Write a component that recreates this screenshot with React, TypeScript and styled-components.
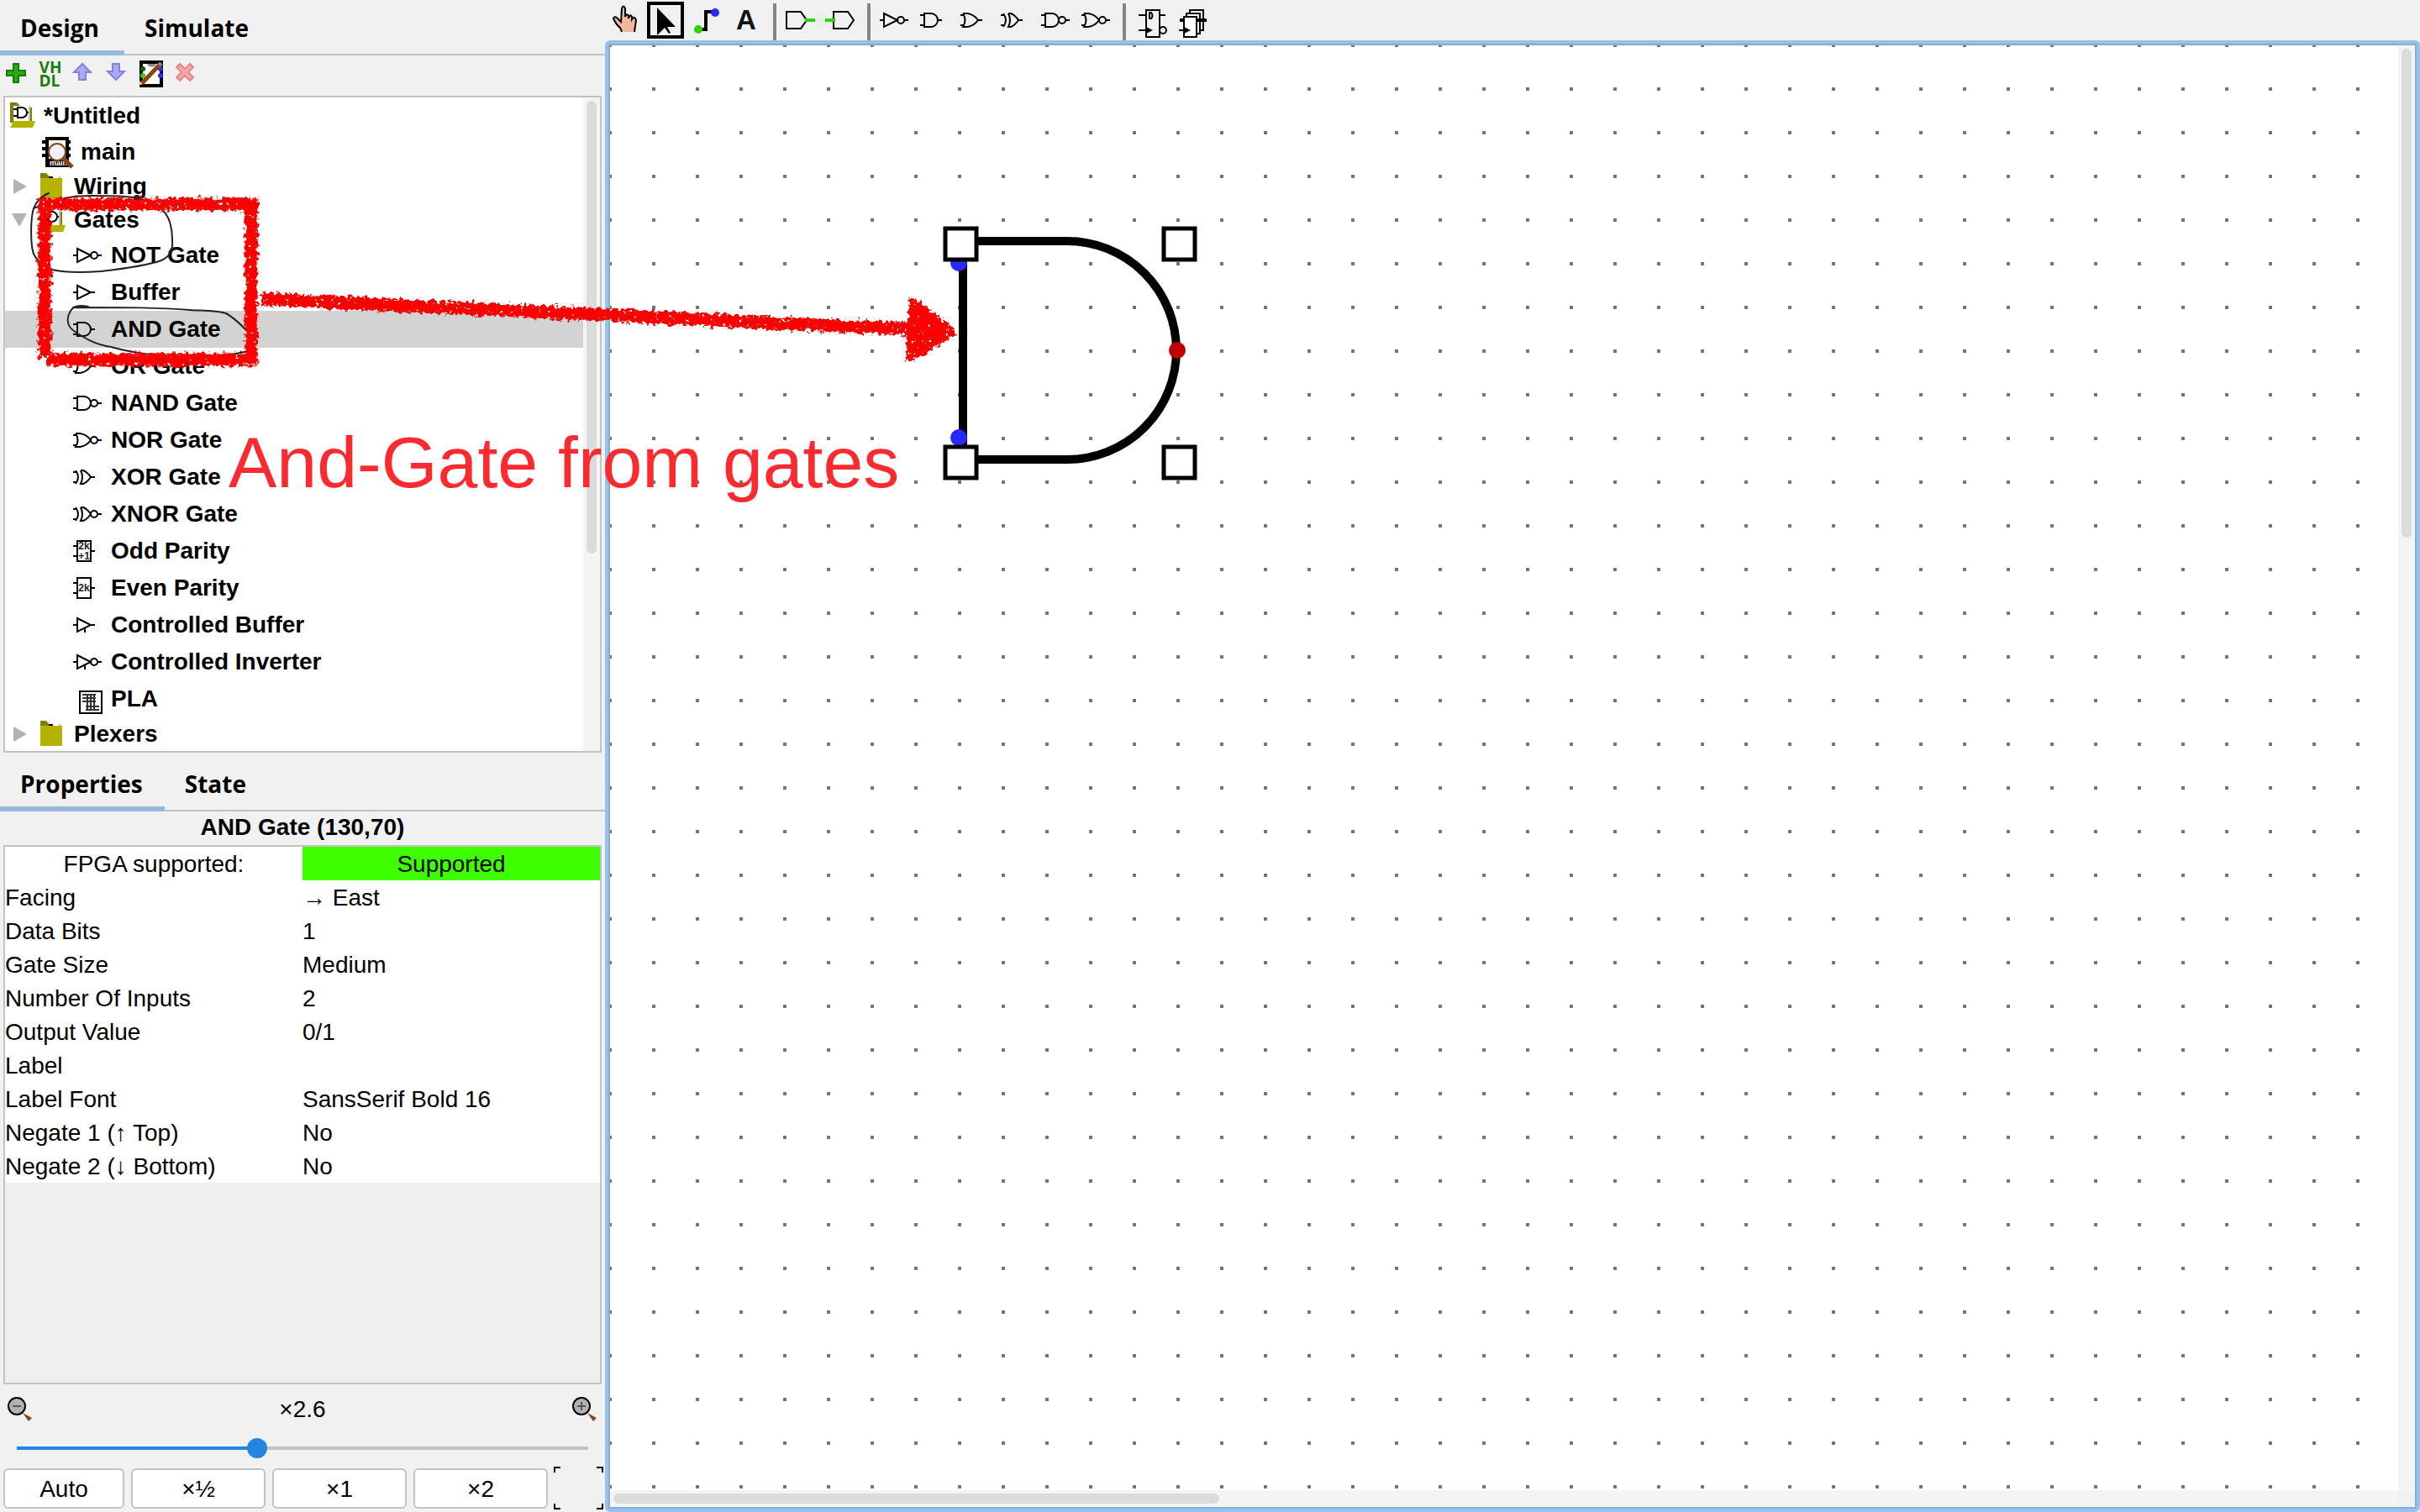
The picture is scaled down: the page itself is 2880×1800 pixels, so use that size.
import React, { useState } from "react";
import styled, { createGlobalStyle, css } from "styled-components";

const colors = {
  panel: "#f1f1f1",
  line: "#c2c2c2",
  focus: "#97c3eb",
  focusInner: "#88add4",
  tab: "#96b9dd",
  accent: "#2285e1",
  olive: "#b4b400",
  darkOlive: "#808000",
  brown: "#8b4513",
  crayon: "#fa0000",
};

const GlobalStyle = createGlobalStyle`
  * { box-sizing: border-box; }
  body {
    margin: 0;
    background: ${colors.panel};
    color: #000;
    font: 28px/40px "Liberation Sans", Arial, sans-serif;
  }
  button, input { font: inherit; color: inherit; }
`;

const Page = styled.div`
  position: relative;
  display: grid;
  grid-template-columns: 25% 1fr;
  height: 100vh;
  overflow: hidden;
`;

const Sidebar = styled.aside`
  display: flex;
  flex-direction: column;
  min-width: 0;
`;

const Tabs = styled.div`
  display: flex;
  flex: none;
  box-shadow: inset 0 -2px ${colors.line};
`;

const Tab = styled.button<{ $active?: boolean }>`
  min-width: 148px;
  height: 66px;
  padding: 0 26px 0 24px;
  border: 0;
  border-top: 6px solid transparent;
  border-bottom: 6px solid ${(p) => (p.$active ? colors.tab : "transparent")};
  background: none;
  font: bold 28px/52px "Open Sans", "Noto Sans", sans-serif;
  text-align: left;
`;

const ProjectBar = styled.div`
  display: flex;
  flex: none;
  height: 48px;
  padding-bottom: 4px;
`;

const BarButton = styled.button`
  display: flex;
  align-items: center;
  justify-content: center;
  width: 40px;
  padding: 0;
  border: 0;
  background: none;
`;

const Vhdl = styled.span`
  color: #1c7c0a;
  font: bold 19px/16px "Open Sans", sans-serif;
  text-align: left;
`;

const TreeBox = styled.div`
  display: flex;
  flex: none;
  margin: 0 4px 4px;
  border: 2px solid ${colors.line};
  background: #fff;
`;

const TreeList = styled.ul`
  flex: 1;
  margin: 0;
  padding: 0;
  list-style: none;
`;

const rowHeights = { root: 44, circuit: 42, library: 40, tool: 44 };
const rowIndents = { root: 6, circuit: 42, library: 8, tool: 78 };
type RowKind = keyof typeof rowHeights;

const TreeRow = styled.button<{ $kind: RowKind; $selected?: boolean }>`
  display: flex;
  align-items: center;
  gap: 8px;
  width: 100%;
  height: ${(p) => rowHeights[p.$kind]}px;
  padding: 0 0 0 ${(p) => rowIndents[p.$kind]}px;
  border: 0;
  background: ${(p) => (p.$selected ? "#d3d3d3" : "none")};
  font-weight: bold;
  text-align: left;
`;

const ScrollTrack = styled.div<{ $horizontal?: boolean }>`
  flex: none;
  padding: 4px;
  background: #f4f4f4;
  ${(p) => (p.$horizontal ? css`height: 20px;` : css`width: 20px;`)}
`;

const ScrollThumb = styled.div<{ $horizontal?: boolean; $size: number }>`
  border-radius: 6px;
  background: #dbdbdb;
  ${(p) =>
    p.$horizontal
      ? css`width: ${p.$size}%; height: 12px;`
      : css`width: 12px; height: ${p.$size}%;`}
`;

const PanelTitle = styled.h2`
  flex: none;
  margin: 0;
  padding-bottom: 2px;
  font: bold 28px/38px "Liberation Sans", Arial, sans-serif;
  text-align: center;
`;

const PropertyBox = styled.div`
  flex: 1;
  min-height: 0;
  margin: 0 4px;
  border: 2px solid ${colors.line};
  background: #efefef;
`;

const PropertyTable = styled.table`
  width: 100%;
  table-layout: fixed;
  border-collapse: collapse;
  background: #fff;
`;

const cell = css`
  height: 40px;
  padding: 2px 0 0;
  font-weight: normal;
  line-height: 38px;
`;

const NameCell = styled.th<{ $center?: boolean }>`
  ${cell}
  text-align: ${(p) => (p.$center ? "center" : "left")};
`;

const ValueCell = styled.td<{ $good?: boolean }>`
  ${cell}
  text-align: ${(p) => (p.$good ? "center" : "left")};
  background: ${(p) => (p.$good ? "#3dff00" : "none")};
`;

const ZoomPanel = styled.div`
  display: flex;
  flex: none;
  flex-direction: column;
  padding: 10px 4px 4px;
`;

const ZoomReadout = styled.div`
  display: flex;
  align-items: center;
  justify-content: space-between;
  height: 40px;
  padding: 0 4px;
`;

const IconButton = styled.button`
  display: flex;
  padding: 0;
  border: 0;
  background: none;
`;

const Slider = styled.input`
  appearance: none;
  height: 24px;
  margin: 14px 4px 12px;
  background: linear-gradient(
      90deg,
      ${colors.accent} var(--filled),
      ${colors.line} var(--filled)
    )
    center / calc(100% - 24px) 4px no-repeat;
  &::-webkit-slider-thumb {
    appearance: none;
    width: 24px;
    height: 24px;
    border-radius: 50%;
    background: ${colors.accent};
  }
`;

const ZoomButtons = styled.div`
  display: grid;
  grid-template-columns: 9fr 10fr 10fr 10fr 56px;
  gap: 8px;
  height: 48px;
`;

const ZoomButton = styled.button`
  padding: 2px 0 0;
  border: 2px solid ${colors.line};
  border-radius: 6px;
  background: #fff;
`;

const Main = styled.main`
  display: flex;
  flex-direction: column;
  min-width: 0;
`;

const ToolBar = styled.div`
  display: flex;
  flex: none;
  height: 48px;
`;

const ToolButton = styled.button<{ $selected?: boolean }>`
  display: flex;
  align-items: center;
  justify-content: center;
  width: 44px;
  height: 44px;
  margin: 2px;
  padding: 0;
  border: 0;
  background: none;
  box-shadow: ${(p) => (p.$selected ? "inset 0 0 0 4px #000" : "none")};
`;

const Separator = styled.div`
  width: 4px;
  margin: 4px 4px 0 8px;
  background: #858585;
`;

const CanvasFrame = styled.div`
  display: flex;
  flex: 1;
  min-height: 0;
  border: 4px solid ${colors.focus};
  border-radius: 6px;
  background: #f1f1f1;
`;

const CanvasInner = styled.div`
  display: flex;
  flex: 1;
  min-width: 0;
  border: 2px solid ${colors.focusInner};
`;

const CanvasColumn = styled.div`
  display: flex;
  flex: 1;
  flex-direction: column;
  min-width: 0;
`;

const Grid = styled.div`
  flex: 1;
  min-height: 0;
  overflow: hidden;
  background: conic-gradient(from 270deg at 4px 4px, #757575 25%, transparent 0)
    -2px -2px / 52px 52px #fff;
`;

const VerticalBar = styled.div`
  display: flex;
  flex: none;
  margin-bottom: 20px;
`;

const Circuit = styled.svg`
  display: block;
  width: 100%;
  height: 100%;
`;

const Ink = styled.svg`
  position: absolute;
  top: 0;
  left: 0;
  width: 100%;
  height: 100%;
  pointer-events: none;
`;

const Note = styled.p`
  position: absolute;
  top: 502px;
  left: 272px;
  margin: 0;
  color: #fb2a2e;
  font-size: 86px;
  line-height: 96px;
  white-space: nowrap;
  pointer-events: none;
`;

const Glyph = styled.svg`
  display: block;
  flex: none;
  overflow: visible;
  shape-rendering: geometricPrecision;
`;

type GateKind =
  | "not" | "buffer" | "and" | "or" | "nand" | "nor" | "xor" | "xnor"
  | "odd" | "even" | "cbuffer" | "cinverter" | "pla";

const AND_BODY = "M8 12H16A8 8 0 0 1 16 28H8ZM3 14H8M3 26H8";
const OR_BODY = "M6 12H11Q19 13 24 20Q19 27 11 28H6Q11 20 6 12M3 14H7M3 26H7";
const XOR_BODY =
  "M12 12H15Q20 14 24 20Q20 26 15 28H12Q16 20 12 12M6 12Q12 20 6 28M3 14H7M3 26H7";
const TRIANGLE = "M3 20H7M8 12L24 20L8 28Z";
const OUT = "M24 20H29";
const CONTROL = "M17 24V29";

const gatePaths: Record<string, string> = {
  not: TRIANGLE,
  buffer: TRIANGLE + OUT,
  and: AND_BODY + OUT,
  or: OR_BODY + OUT,
  nand: AND_BODY,
  nor: OR_BODY,
  xor: XOR_BODY + OUT,
  xnor: XOR_BODY,
  cbuffer: TRIANGLE + OUT + CONTROL,
  cinverter: TRIANGLE + CONTROL,
  odd: "M8 8H24V32H8ZM3 14H7M3 26H7M25 20H29",
  even: "M8 8H24V32H8ZM3 14H7M3 26H7M25 20H29",
  pla: "M11 11H37V37H11Z",
};

const inverted = ["not", "nand", "nor", "xnor", "cinverter"];

function GateIcon({ kind }: { kind: GateKind }) {
  return (
    <Glyph width="40" height="40" fill="none" stroke="#000" strokeWidth="2" aria-hidden="true">
      <path d={gatePaths[kind]} />
      {inverted.includes(kind) && (
        <>
          <circle cx="28" cy="20" r="4" />
          <path d="M32 20H37" />
        </>
      )}
      {(kind === "odd" || kind === "even") && (
        <g fill="#222" stroke="none" fontSize="12" fontWeight="bold" textAnchor="middle">
          <text x="16" y={kind === "odd" ? 18 : 24}>2k</text>
          {kind === "odd" && <text x="16" y="30">+1</text>}
        </g>
      )}
      {kind === "pla" && (
        <g stroke="#333">
          <path d="M14 15H30M14 19H30M14 23H30M18 29H34M18 33H34" />
          <path d="M20 14V34M24 14V34M28 14V34" />
        </g>
      )}
    </Glyph>
  );
}

function FolderIcon({ open }: { open?: boolean }) {
  return (
    <Glyph width="32" height="32" aria-hidden="true">
      {open ? (
        <>
          <path d="M0 0H8L12 4H4V24H0Z" fill={colors.darkOlive} />
          <path d="M22 4H24V22H22Z" fill="#c0c0c0" />
          <path d="M24 6H26V22H24Z" fill={colors.darkOlive} />
          <path
            d="M9 6H14A6 6 0 0 1 14 18H9ZM4 8H8M4 16H8M20 12H22"
            fill="none"
            stroke="#000"
            strokeWidth="2"
          />
          <path d="M4 22H30L27 30H0Z" fill={colors.olive} />
        </>
      ) : (
        <>
          <path d="M0 0H7L12 6H0Z" fill={colors.darkOlive} />
          <path d="M10 5H15" stroke="#000" strokeWidth="2" />
          <path d="M22 4H24V6H22Z" fill="#c0c0c0" />
          <path d="M0 6H26V30H0Z" fill={colors.olive} />
        </>
      )}
    </Glyph>
  );
}

function MainIcon() {
  return (
    <Glyph width="40" height="40" aria-hidden="true">
      <path d="M6 2H34V38H6Z" />
      <path d="M2 6H36V10H2ZM2 14H36V18H2ZM2 22H36V26H2Z" />
      <path d="M10 6H30V28H10Z" fill="#fff" />
      <text x="11" y="36" fontSize="9" fill="#fff">main</text>
      <circle cx="20" cy="20" r="10" fill="#f0f0ff" stroke={colors.brown} strokeWidth="2" />
      <path d="M27 27L38 38" stroke={colors.brown} strokeWidth="5" />
    </Glyph>
  );
}

function Disclosure({ open }: { open?: boolean }) {
  return (
    <Glyph width="26" height="20" fill="#b2b2b2" aria-hidden="true">
      <path d={open ? "M0 2H18L9 18Z" : "M2 1L18 10L2 19Z"} />
    </Glyph>
  );
}

const PlusIcon = () => (
  <Glyph width="32" height="32" aria-hidden="true">
    <path d="M12 4H18V12H26V18H18V26H12V18H4V12H12Z" fill="#27ae00" stroke="#1a7a10" strokeWidth="2" />
  </Glyph>
);

const MoveIcon = ({ down }: { down?: boolean }) => (
  <Glyph width="32" height="32" fill="#abaaf8" stroke="#8280e0" strokeWidth="2" aria-hidden="true">
    <path d={down ? "M10 4H18V13H24L14 23L4 13H10Z" : "M10 23H18V14H24L14 4L4 14H10Z"} />
  </Glyph>
);

const EditIcon = () => (
  <Glyph width="32" height="32" aria-hidden="true">
    <path d="M4 2H28V30H4Z" fill="#fff" stroke="#000" strokeWidth="4" />
    <path d="M11 4A6 6 0 0 0 22 4Z" fill="#8a8a8a" />
    <circle cx="6" cy="10" r="3" fill="#075a07" />
    <circle cx="6" cy="18" r="3" fill="#2ed400" />
    <circle cx="27" cy="10" r="3" fill="#2828ff" />
    <circle cx="27" cy="18" r="3" fill="#2828ff" />
    <path d="M5 27L27 4" stroke={colors.brown} strokeWidth="5" />
    <path d="M25 6L28 3" stroke="#808080" strokeWidth="5" />
    <path d="M1 30L2 24L6 28Z" fill="#e8bf95" />
  </Glyph>
);

const DeleteIcon = () => (
  <Glyph width="32" height="32" aria-hidden="true">
    <path
      d="M10 4L16 10L22 4L26 8L20 14L26 20L22 24L16 18L10 24L6 20L12 14L6 8Z"
      fill="#f6aaaa"
      stroke="#e38888"
      strokeWidth="2"
    />
  </Glyph>
);

const HandIcon = () => (
  <Glyph width="40" height="40" aria-hidden="true">
    <path
      d="M16 34L14 29Q9 25 6 18Q7 15 10 17L15 22L16 6Q18 1 20 6V16Q22 11 24 15V18Q26 12 28 16V19Q31 14 33 20L32 27L31 34"
      fill="#f1b6a0"
      stroke="#000"
      strokeWidth="2"
    />
  </Glyph>
);

const ArrowIcon = () => (
  <Glyph width="40" height="40" aria-hidden="true">
    <path d="M10 5L32 28L22 28L26 35L24 36L19 29L11 37H10Z" />
  </Glyph>
);

const WireIcon = () => (
  <Glyph width="40" height="40" aria-hidden="true">
    <path d="M11 31H20V10H30" fill="none" stroke="#000" strokeWidth="4" />
    <circle cx="11" cy="31" r="5" fill="#2ed400" />
    <circle cx="31" cy="11" r="5" fill="#2828ff" />
  </Glyph>
);

const Letter = styled.span`
  color: #111;
  font-size: 33px;
  font-weight: bold;
`;

const PinIcon = ({ output }: { output?: boolean }) => (
  <Glyph width="40" height="40" fill="none" stroke="#000" strokeWidth="2" aria-hidden="true">
    <path d={output ? "M12 10H29L36 20L29 30H12Z" : "M4 10H21L28 20L21 30H4Z"} />
    <path d={output ? "M2 20H14" : "M26 20H38"} stroke="#2ed400" strokeWidth="4" />
  </Glyph>
);

const FlipFlopIcon = () => (
  <Glyph width="40" height="40" viewBox="-4 0 40 40" fill="none" stroke="#000" strokeWidth="2" aria-hidden="true">
    <path d="M12 8H28V40H12ZM3 14H12M3 32H12M28 14H35M16 11V18H18Q21 15 18 11Z" />
    <path d="M12 28L20 32L12 36Z" fill="#000" stroke="none" />
    <circle cx="32" cy="32" r="4" />
  </Glyph>
);

const RegisterIcon = () => (
  <Glyph width="40" height="40" viewBox="-4 0 40 40" fill="#fff" stroke="#000" strokeWidth="2" aria-hidden="true">
    <path d="M16 8H32V32H16Z" />
    <path d="M12 12H28V36H12Z" />
    <path d="M25 20H36M4 20H9" strokeWidth="4" />
    <path d="M9 16H24V40H9ZM3 32H9" />
    <path d="M9 28L17 32L9 36Z" fill="#000" stroke="none" />
  </Glyph>
);

const LensIcon = ({ plus }: { plus?: boolean }) => (
  <Glyph width="32" height="32" aria-hidden="true">
    <circle cx="12" cy="12" r="10" fill="#b2b2b2" stroke="#000" strokeWidth="2" />
    <path d={plus ? "M7 12H17M12 7V17" : "M7 12H17"} stroke="#555" strokeWidth="2" />
    <path d="M19 20L30 26L26 30Z" fill={colors.brown} />
  </Glyph>
);

const FitIcon = () => (
  <Glyph width="56" height="48" fill="none" stroke="#000" strokeWidth="2" aria-hidden="true">
    <path d="M0 5V-1H7M50 -1H57V5M0 42V48H7M50 48H57V42" />
  </Glyph>
);

const tools: [string, GateKind][] = [
  ["NOT Gate", "not"],
  ["Buffer", "buffer"],
  ["AND Gate", "and"],
  ["OR Gate", "or"],
  ["NAND Gate", "nand"],
  ["NOR Gate", "nor"],
  ["XOR Gate", "xor"],
  ["XNOR Gate", "xnor"],
  ["Odd Parity", "odd"],
  ["Even Parity", "even"],
  ["Controlled Buffer", "cbuffer"],
  ["Controlled Inverter", "cinverter"],
  ["PLA", "pla"],
];

const properties = [
  ["Facing", "→ East"],
  ["Data Bits", "1"],
  ["Gate Size", "Medium"],
  ["Number Of Inputs", "2"],
  ["Output Value", "0/1"],
  ["Label", ""],
  ["Label Font", "SansSerif Bold 16"],
  ["Negate 1 (↑ Top)", "No"],
  ["Negate 2 (↓ Bottom)", "No"],
];

const barGates: GateKind[] = ["not", "and", "or", "xor", "nand", "nor"];

function Explorer() {
  const [selected, setSelected] = useState("AND Gate");
  return (
    <TreeBox>
      <TreeList>
        <li><TreeRow $kind="root"><FolderIcon open />*Untitled</TreeRow></li>
        <li><TreeRow $kind="circuit"><MainIcon />main</TreeRow></li>
        <li><TreeRow $kind="library"><Disclosure /><FolderIcon />Wiring</TreeRow></li>
        <li><TreeRow $kind="library"><Disclosure open /><FolderIcon open />Gates</TreeRow></li>
        {tools.map(([name, kind]) => (
          <li key={name}>
            <TreeRow $kind="tool" $selected={name === selected} onClick={() => setSelected(name)}>
              <GateIcon kind={kind} />
              {name}
            </TreeRow>
          </li>
        ))}
        <li><TreeRow $kind="library"><Disclosure /><FolderIcon />Plexers</TreeRow></li>
      </TreeList>
      <ScrollTrack><ScrollThumb $size={70} /></ScrollTrack>
    </TreeBox>
  );
}

function ZoomControls() {
  const [zoom, setZoom] = useState(42);
  return (
    <ZoomPanel>
      <ZoomReadout>
        <IconButton aria-label="Zoom out"><LensIcon /></IconButton>
        <label htmlFor="zoom">×2.6</label>
        <IconButton aria-label="Zoom in"><LensIcon plus /></IconButton>
      </ZoomReadout>
      <Slider
        id="zoom"
        type="range"
        min={0}
        max={100}
        value={zoom}
        onChange={(e) => setZoom(Number(e.target.value))}
        style={{ "--filled": `${zoom}%` } as React.CSSProperties}
      />
      <ZoomButtons>
        <ZoomButton>Auto</ZoomButton>
        <ZoomButton>×½</ZoomButton>
        <ZoomButton>×1</ZoomButton>
        <ZoomButton>×2</ZoomButton>
        <IconButton aria-label="Fit to window"><FitIcon /></IconButton>
      </ZoomButtons>
    </ZoomPanel>
  );
}

const handles = [[399, 218], [659, 218], [399, 478], [659, 478]];

function CircuitDrawing() {
  return (
    <Circuit aria-label="AND gate on the canvas">
      <path
        d="M420 233H544A130 130 0 0 1 544 493H420Z"
        fill="none"
        stroke="#000"
        strokeWidth="10"
      />
      <circle cx="415" cy="259" r="10" fill="#2828ff" />
      <circle cx="415" cy="467" r="10" fill="#2828ff" />
      <circle cx="675" cy="363" r="10" fill="#c00000" />
      {handles.map(([x, y]) => (
        <rect key={`${x}-${y}`} x={x} y={y} width="37" height="37" fill="#fff" stroke="#000" strokeWidth="5" />
      ))}
    </Circuit>
  );
}

function Annotations() {
  return (
    <>
      <Ink aria-hidden="true">
        <defs>
          <filter id="crayon" x="0" y="200" width="1200" height="270" filterUnits="userSpaceOnUse">
            <feTurbulence type="fractalNoise" baseFrequency="0.2" numOctaves="3" seed="4" result="grain" />
            <feDisplacementMap in="SourceGraphic" in2="grain" scale="11" xChannelSelector="R" yChannelSelector="G" result="rough" />
            <feColorMatrix in="grain" values="0 0 0 0 0  0 0 0 0 0  0 0 0 0 0  0 0 14 0 -3" result="holes" />
            <feComposite in="rough" in2="holes" operator="in" />
          </filter>
        </defs>
        <g fill="none" stroke="#222" strokeWidth="2" strokeLinecap="round">
          <path d="M58 230C48 234 42 242 40 248C36 262 36 296 41 304C45 312 52 317 62 321C78 325 106 324 120 323C146 320 176 316 192 310C202 306 206 298 205 286C205 268 200 252 187 246C172 234 150 233 110 233C80 233 70 238 52 243L40 248" />
          <path d="M105 365C94 363 88 364 84 370C79 378 79 388 88 394C100 402 112 410 132 413C158 420 182 424 228 424C256 425 280 422 295 418V395C288 388 280 379 269 373C256 369 240 370 226 369C190 366 150 366 87 366" />
          <circle cx="163" cy="236" r="3" fill="#222" />
        </g>
        <g fill="none" stroke={colors.crayon} strokeWidth="15" filter="url(#crayon)">
          <path d="M46 243H306" />
          <path d="M53 240V425" />
          <path d="M299 236V435" />
          <path d="M56 428H306" />
          <path d="M312 356L1084 392" />
          <path d="M1087 360L1133 396L1083 425Z" fill={colors.crayon} strokeWidth="10" strokeLinejoin="round" />
        </g>
      </Ink>
      <Note>And-Gate from gates</Note>
    </>
  );
}

export default function App() {
  return (
    <Page>
      <GlobalStyle />
      <Sidebar>
        <Tabs>
          <Tab $active>Design</Tab>
          <Tab>Simulate</Tab>
        </Tabs>
        <ProjectBar>
          <BarButton aria-label="Add circuit"><PlusIcon /></BarButton>
          <BarButton><Vhdl>VH<br />DL</Vhdl></BarButton>
          <BarButton aria-label="Move up"><MoveIcon /></BarButton>
          <BarButton aria-label="Move down"><MoveIcon down /></BarButton>
          <BarButton aria-label="Edit appearance"><EditIcon /></BarButton>
          <BarButton aria-label="Delete"><DeleteIcon /></BarButton>
        </ProjectBar>
        <Explorer />
        <Tabs>
          <Tab $active>Properties</Tab>
          <Tab>State</Tab>
        </Tabs>
        <PanelTitle>AND Gate (130,70)</PanelTitle>
        <PropertyBox>
          <PropertyTable>
            <tbody>
              <tr>
                <NameCell scope="row" $center>FPGA supported:</NameCell>
                <ValueCell $good>Supported</ValueCell>
              </tr>
              {properties.map(([name, value]) => (
                <tr key={name}>
                  <NameCell scope="row">{name}</NameCell>
                  <ValueCell>{value}</ValueCell>
                </tr>
              ))}
            </tbody>
          </PropertyTable>
        </PropertyBox>
        <ZoomControls />
      </Sidebar>
      <Main>
        <ToolBar>
          <ToolButton aria-label="Poke"><HandIcon /></ToolButton>
          <ToolButton aria-label="Select" $selected><ArrowIcon /></ToolButton>
          <ToolButton aria-label="Wire"><WireIcon /></ToolButton>
          <ToolButton><Letter>A</Letter></ToolButton>
          <Separator />
          <ToolButton aria-label="Input pin"><PinIcon /></ToolButton>
          <ToolButton aria-label="Output pin"><PinIcon output /></ToolButton>
          <Separator />
          {barGates.map((kind) => (
            <ToolButton key={kind} aria-label={`${kind} gate`}><GateIcon kind={kind} /></ToolButton>
          ))}
          <Separator />
          <ToolButton aria-label="D flip-flop"><FlipFlopIcon /></ToolButton>
          <ToolButton aria-label="Register"><RegisterIcon /></ToolButton>
        </ToolBar>
        <CanvasFrame>
          <CanvasInner>
            <CanvasColumn>
              <Grid><CircuitDrawing /></Grid>
              <ScrollTrack $horizontal><ScrollThumb $horizontal $size={34} /></ScrollTrack>
            </CanvasColumn>
            <VerticalBar>
              <ScrollTrack><ScrollThumb $size={34} /></ScrollTrack>
            </VerticalBar>
          </CanvasInner>
        </CanvasFrame>
      </Main>
      <Annotations />
    </Page>
  );
}
